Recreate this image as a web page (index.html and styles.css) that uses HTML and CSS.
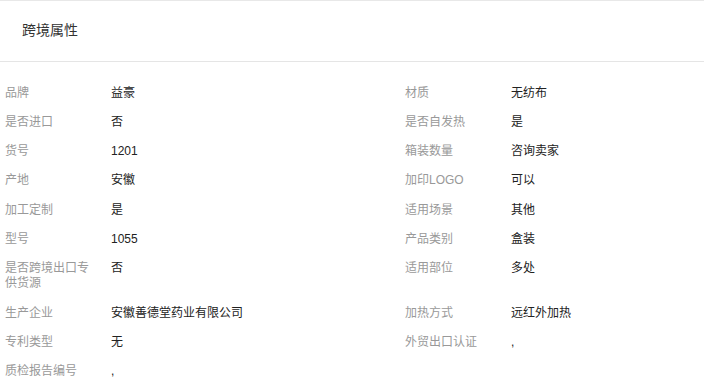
FILE: index.html
```html
<!DOCTYPE html>
<html lang="zh-CN">
<head>
    <meta charset="UTF-8">
    <meta name="viewport" content="width=device-width, initial-scale=1.0">
    <title>跨境属性</title>
    <link rel="stylesheet" href="styles.css">
</head>
<body>
    <div class="panel">
        <div class="panel-title">跨境属性</div>
        <div class="attr-list">
            <div class="attr"><span class="attr-name">品牌</span><span class="attr-value">益豪</span></div>
            <div class="attr"><span class="attr-name">材质</span><span class="attr-value">无纺布</span></div>
            <div class="attr"><span class="attr-name">是否进口</span><span class="attr-value">否</span></div>
            <div class="attr"><span class="attr-name">是否自发热</span><span class="attr-value">是</span></div>
            <div class="attr"><span class="attr-name">货号</span><span class="attr-value">1201</span></div>
            <div class="attr"><span class="attr-name">箱装数量</span><span class="attr-value">咨询卖家</span></div>
            <div class="attr"><span class="attr-name">产地</span><span class="attr-value">安徽</span></div>
            <div class="attr"><span class="attr-name">加印LOGO</span><span class="attr-value">可以</span></div>
            <div class="attr"><span class="attr-name">加工定制</span><span class="attr-value">是</span></div>
            <div class="attr"><span class="attr-name">适用场景</span><span class="attr-value">其他</span></div>
            <div class="attr"><span class="attr-name">型号</span><span class="attr-value">1055</span></div>
            <div class="attr"><span class="attr-name">产品类别</span><span class="attr-value">盒装</span></div>
            <div class="attr"><span class="attr-name">是否跨境出口专供货源</span><span class="attr-value">否</span></div>
            <div class="attr"><span class="attr-name">适用部位</span><span class="attr-value">多处</span></div>
            <div class="attr"><span class="attr-name">生产企业</span><span class="attr-value">安徽善德堂药业有限公司</span></div>
            <div class="attr"><span class="attr-name">加热方式</span><span class="attr-value">远红外加热</span></div>
            <div class="attr"><span class="attr-name">专利类型</span><span class="attr-value">无</span></div>
            <div class="attr"><span class="attr-name">外贸出口认证</span><span class="attr-value">,</span></div>
            <div class="attr"><span class="attr-name">质检报告编号</span><span class="attr-value">,</span></div>
        </div>
    </div>
</body>
</html>
```

FILE: styles.css
```css
body {
    margin: 0;
    font-family: "Liberation Sans", "Noto Sans CJK SC", sans-serif;
    color: #333;
    background: #fff;
    overflow: hidden;
}
.panel {
    border-top: 1px solid #e8e8e8;
}
.panel-title {
    height: 60px;
    line-height: 59px;
    padding-left: 22px;
    font-size: 14px;
    color: #333;
    border-bottom: 1px solid #e5e5e5;
}
.attr-list {
    display: grid;
    grid-template-columns: 400px 1fr;
    row-gap: 14.3px;
    padding: 23.5px 0 0 5px;
    font-size: 12px;
    line-height: 15px;
}
.attr {
    display: flex;
}
.attr-name {
    width: 90px;
    margin-right: 16px;
    flex-shrink: 0;
    color: #999;
}
.attr-value {
    color: #222;
}
```
